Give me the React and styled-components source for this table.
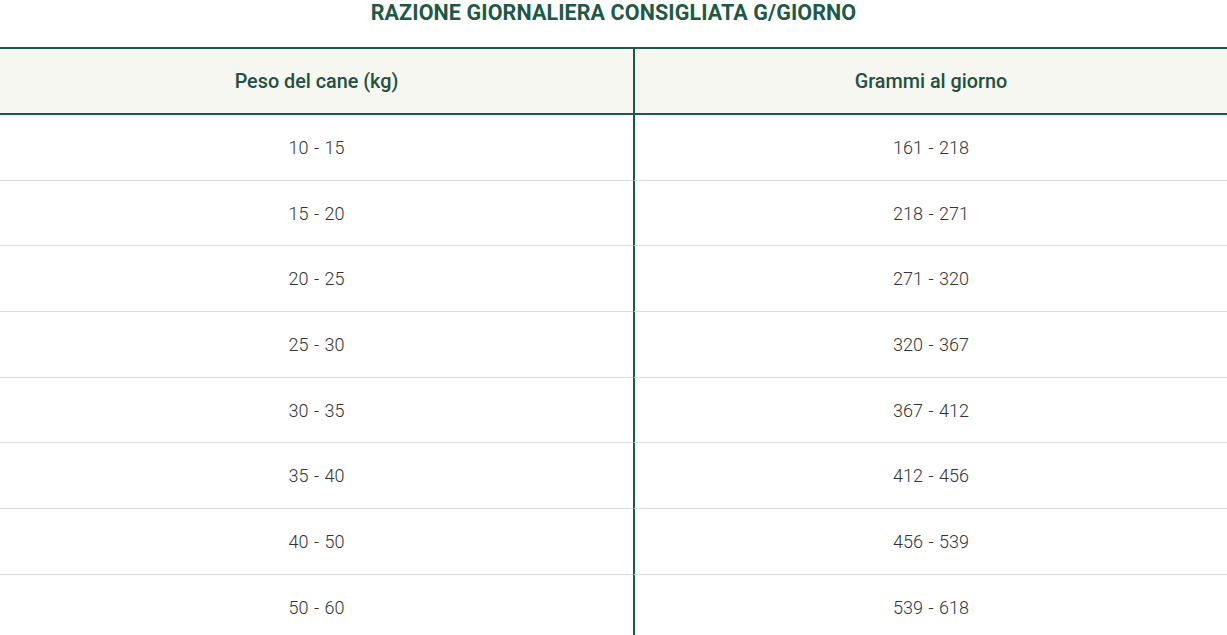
import React from 'react';
import styled, { createGlobalStyle } from 'styled-components';

const GlobalStyle = createGlobalStyle`
  html, body {
    margin: 0;
    padding: 0;
    background: #ffffff;
  }
  body {
    font-family: Roboto, "Liberation Sans", sans-serif;
  }
`;

const Page = styled.div`
  width: 1227px;
  overflow: hidden;
`;

const Title = styled.h2`
  margin: 0;
  height: 47px;
  box-sizing: border-box;
  text-align: center;
  font-size: 21.5px;
  font-weight: 700;
  line-height: 25px;
  letter-spacing: 0.1px;
  color: #1d5a46;
`;

const Table = styled.div`
  display: grid;
  grid-template-columns: 633px 1fr;
  border-top: 2px solid #1f5848;
`;

const HeadCell = styled.div`
  height: 64px;
  display: flex;
  align-items: center;
  justify-content: center;
  background: #f7f7f1;
  border-bottom: 2px solid #1f5848;
  border-left: ${p => (p.$divider ? '2px solid #1f5848' : 'none')};
  font-size: 19.8px;
  font-weight: 500;
  color: #22513f;
`;

const Cell = styled.div`
  height: 64.7px;
  display: flex;
  align-items: center;
  justify-content: center;
  border-bottom: 1px solid #dcdcdc;
  border-left: ${p => (p.$divider ? '2px solid #1f5848' : 'none')};
  font-size: 18px;
  font-weight: 300;
  word-spacing: 1px;
  color: #333333;
`;

const rows = [
  ['10 - 15', '161 - 218'],
  ['15 - 20', '218 - 271'],
  ['20 - 25', '271 - 320'],
  ['25 - 30', '320 - 367'],
  ['30 - 35', '367 - 412'],
  ['35 - 40', '412 - 456'],
  ['40 - 50', '456 - 539'],
  ['50 - 60', '539 - 618'],
];

export default function App() {
  return (
    <Page>
      <GlobalStyle />
      <Title>RAZIONE GIORNALIERA CONSIGLIATA G/GIORNO</Title>
      <Table>
        <HeadCell>Peso del cane (kg)</HeadCell>
        <HeadCell $divider>Grammi al giorno</HeadCell>
        {rows.map(([peso, grammi]) => (
          <React.Fragment key={peso}>
            <Cell>{peso}</Cell>
            <Cell $divider>{grammi}</Cell>
          </React.Fragment>
        ))}
      </Table>
    </Page>
  );
}
